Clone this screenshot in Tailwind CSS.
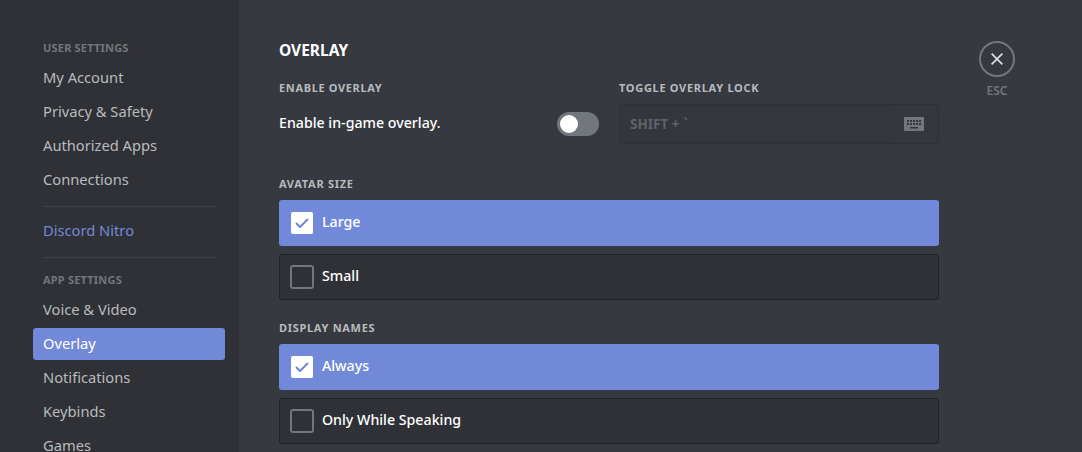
<!DOCTYPE html>
<html lang="en">

<head>
    <meta charset="UTF-8">
    <title>Discord Settings</title>
    <script src="https://cdn.jsdelivr.net/npm/@tailwindcss/browser@4"></script>
</head>

<body class="bg-[#36393f] font-['Noto_Sans',sans-serif] overflow-hidden">
    <div class="flex h-[452px] overflow-hidden">
        <nav class="w-[239px] shrink-0 bg-[#2f3136] pl-[33px] pr-[14px] pt-[40px]">
            <h3 class="pl-[10px] h-[16px] mb-[5px] text-[11px] leading-[16px] font-bold tracking-[0.2px] text-[#72767d]">USER SETTINGS</h3>
            <a class="block pl-[10px] h-[32px] mb-[2px] rounded-[3px] text-[14.7px] leading-[32px] text-[#b9bbbe]">My Account</a>
            <a class="block pl-[10px] h-[32px] mb-[2px] rounded-[3px] text-[14.7px] leading-[32px] text-[#b9bbbe]">Privacy &amp; Safety</a>
            <a class="block pl-[10px] h-[32px] mb-[2px] rounded-[3px] text-[14.7px] leading-[32px] text-[#b9bbbe]">Authorized Apps</a>
            <a class="block pl-[10px] h-[32px] mb-[2px] rounded-[3px] text-[14.7px] leading-[32px] text-[#b9bbbe]">Connections</a>
            <div class="mx-[10px] mt-[11px] mb-[8px] h-px bg-[#3e4147]"></div>
            <a class="block pl-[10px] h-[32px] mb-[2px] rounded-[3px] text-[14.7px] leading-[30px] text-[#7289da]">Discord Nitro</a>
            <div class="mx-[10px] mt-[10px] mb-[14px] h-px bg-[#3e4147]"></div>
            <h3 class="pl-[10px] h-[16px] mb-[6px] text-[11px] leading-[16px] font-bold tracking-[0.2px] text-[#72767d]">APP SETTINGS</h3>
            <a class="block pl-[10px] h-[32px] mb-[2px] rounded-[3px] text-[14.7px] leading-[30px] text-[#b9bbbe]">Voice &amp; Video</a>
            <a class="block pl-[10px] h-[32px] mb-[2px] rounded-[3px] text-[14.7px] leading-[30px] text-white bg-[#7289da]">Overlay</a>
            <a class="block pl-[10px] h-[32px] mb-[2px] rounded-[3px] text-[14.7px] leading-[30px] text-[#b9bbbe]">Notifications</a>
            <a class="block pl-[10px] h-[32px] mb-[2px] rounded-[3px] text-[14.7px] leading-[30px] text-[#b9bbbe]">Keybinds</a>
            <a class="block pl-[10px] h-[32px] mb-[2px] rounded-[3px] text-[14.7px] leading-[30px] text-[#b9bbbe]">Games</a>
        </nav>

        <main class="flex pl-[40px] pt-[40px] gap-[40px]">
            <div class="w-[660px] shrink-0">
                <h2 class="h-[20px] mb-[20px] text-[15.500px] leading-[20px] font-bold text-white">OVERLAY</h2>
                <div class="flex gap-[20px]">
                    <div class="w-[320px]">
                        <h5 class="h-[16px] mb-[8px] text-[11px] leading-[16px] font-bold tracking-[0.65px] text-[#b9bbbe]">ENABLE OVERLAY</h5>
                        <div class="flex items-center justify-between h-[40px]">
                            <span class="mb-[2px] text-[14.200px] font-medium text-white">Enable in-game overlay.</span>
                            <span class="flex items-center w-[42px] h-[24px] pl-[3px] rounded-full bg-[#72767d]">
                                <span class="w-[18px] h-[18px] rounded-full bg-white"></span>
                            </span>
                        </div>
                    </div>
                    <div class="w-[320px]">
                        <h5 class="h-[16px] mb-[8px] text-[11px] leading-[16px] font-bold tracking-[0.7px] text-[#b9bbbe]">TOGGLE OVERLAY LOCK</h5>
                        <div class="flex items-center justify-between h-[40px] pl-[10px] pr-[4px] rounded-[3px] border border-[#2f3136] bg-[#33363c]">
                            <span class="text-[13.500px] font-bold text-[#5f6269]">SHIFT + `</span>
                            <span class="flex items-center justify-center w-[40px] h-[38px] bg-[#36393f]/40">
                                <svg width="20" height="14" viewBox="0 0 20 14">
                                    <path fill="#72767d" fill-rule="evenodd" d="M1 0h18a1 1 0 0 1 1 1v12a1 1 0 0 1-1 1H1a1 1 0 0 1-1-1V1a1 1 0 0 1 1-1zM3 3v2h2V3zm3 0v2h2V3zm3 0v2h2V3zm3 0v2h2V3zm3 0v2h2V3zM3 6v2h2V6zm3 0v2h2V6zm3 0v2h2V6zm3 0v2h2V6zm3 0v2h2V6zM6 10v1.500h8V10z"/>
                                </svg>
                            </span>
                        </div>
                    </div>
                </div>

                <h5 class="h-[16px] mt-[32px] mb-[8px] text-[11px] leading-[16px] font-bold tracking-[0.7px] text-[#b9bbbe]">AVATAR SIZE</h5>
                <div class="flex items-center gap-[8px] h-[46px] mb-[8px] pl-[11px] rounded-[3px] bg-[#7289da]">
                    <span class="flex items-center justify-center w-[24px] h-[24px] rounded-[3px] border border-[#7289da] bg-white">
                        <svg width="18" height="18" viewBox="0 0 18 18"><path fill="none" stroke="#7289da" stroke-width="2" d="M3 9l4 4 8-8"/></svg>
                    </span>
                    <span class="mb-[2px] text-[14.200px] font-medium text-white">Large</span>
                </div>
                <div class="flex items-center gap-[8px] h-[46px] pl-[10px] rounded-[3px] border border-[#202225] bg-[#2f3136]">
                    <span class="w-[24px] h-[24px] rounded-[3px] border-2 border-[#72767d]"></span>
                    <span class="mb-[2px] text-[14.200px] font-medium text-white">Small</span>
                </div>

                <h5 class="h-[16px] mt-[20px] mb-[8px] text-[11px] leading-[16px] font-bold tracking-[0.7px] text-[#b9bbbe]">DISPLAY NAMES</h5>
                <div class="flex items-center gap-[8px] h-[46px] mb-[8px] pl-[11px] rounded-[3px] bg-[#7289da]">
                    <span class="flex items-center justify-center w-[24px] h-[24px] rounded-[3px] border border-[#7289da] bg-white">
                        <svg width="18" height="18" viewBox="0 0 18 18"><path fill="none" stroke="#7289da" stroke-width="2" d="M3 9l4 4 8-8"/></svg>
                    </span>
                    <span class="mb-[2px] text-[14.200px] font-medium text-white">Always</span>
                </div>
                <div class="flex items-center gap-[8px] h-[46px] pl-[10px] rounded-[3px] border border-[#202225] bg-[#2f3136]">
                    <span class="w-[24px] h-[24px] rounded-[3px] border-2 border-[#72767d]"></span>
                    <span class="mb-[2px] text-[14.200px] font-medium text-white">Only While Speaking</span>
                </div>
            </div>

            <div class="flex flex-col items-center w-[36px] shrink-0 pt-px">
                <span class="flex items-center justify-center w-[36px] h-[36px] rounded-full border-2 border-[#72767d]">
                    <svg width="18" height="18" viewBox="0 0 24 24"><path fill="#dcddde" d="M18.400 4L12 10.400 5.600 4 4 5.600 10.400 12 4 18.400 5.600 20 12 13.600 18.400 20 20 18.400 13.600 12 20 5.600z"/></svg>
                </span>
                <span class="mt-[4px] text-[12px] leading-[20px] font-semibold text-[#72767d]">ESC</span>
            </div>
        </main>
    </div>
</body>

</html>
